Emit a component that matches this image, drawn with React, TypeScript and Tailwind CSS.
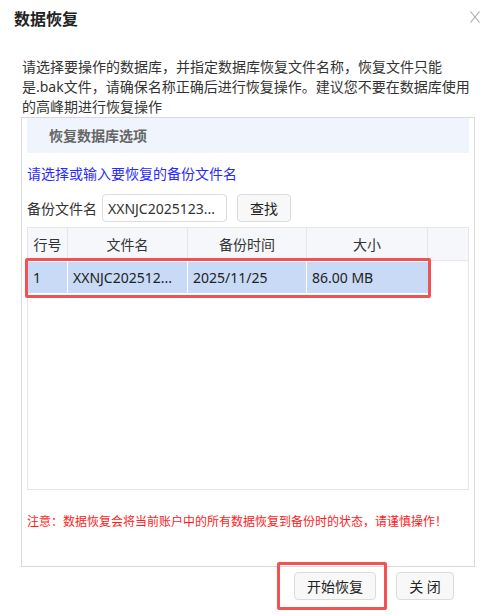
import React from "react";

export default function App() {
  const font = { fontFamily: '"Noto Sans", "Noto Sans CJK SC", sans-serif' };
  return (
    <div className="relative w-[481px] h-[615px] bg-white text-[#333] overflow-hidden" style={font}>
      {/* header */}
      <div className="flex items-start justify-between pl-[14px] pr-[1px] pt-[8px]">
        <div className="text-[16px] leading-[22px] font-bold text-[#222]">数据恢复</div>
        <svg width="10" height="12" viewBox="0 0 10 12" className="mt-[3px]">
          <path d="M0.5 0.5 L9.5 11.5 M9.5 0.5 L0.5 11.5" stroke="#a8a8a8" strokeWidth="1.1" fill="none" />
        </svg>
      </div>

      {/* description */}
      <div className="mt-[27px] pl-[22px] pr-[9px] text-[14px] leading-[20px] text-[#333]">
        请选择要操作的数据库，并指定数据库恢复文件名称，恢复文件只能是.bak文件，请确保名称正确后进行恢复操作。建议您不要在数据库使用的高峰期进行恢复操作
      </div>

      {/* options box */}
      <div className="ml-[21px] w-[454px] h-[450px] border border-[#d9d9d9] px-[5px] flex flex-col">
        <div className="h-[35px] bg-[#f0f4fd] flex items-center pl-[22px] text-[14px] font-bold text-[#666]">
          恢复数据库选项
        </div>
        <div className="mt-[11px] text-[14px] leading-[20px] text-[#2a2aff]">请选择或输入要恢复的备份文件名</div>
        <div className="mt-[10px] flex items-center h-[28px]">
          <span className="text-[14px] text-[#333] w-[75px]">备份文件名</span>
          <div className="w-[125px] h-[28px] border border-[#dcdcdc] rounded-[4px] flex items-center px-[5px] text-[14px] text-[#333] whitespace-nowrap overflow-hidden">
            XXNJC2025123...
          </div>
          <button className="ml-[10px] w-[54px] h-[28px] border border-[#dcdcdc] rounded-[4px] bg-[#f8f8f8] text-[14px] text-[#222] flex items-center justify-center">
            查找
          </button>
        </div>

        {/* table */}
        <div className="mt-[5px] w-[442px] h-[263px] border border-[#e6e6e6] flex flex-col">
          <div className="h-[33px] bg-[#f5f7fa] border-b border-[#e8e8e8] flex text-[14px] text-[#333]">
            <div className="w-[40px] border-r border-[#e6e6e6] flex items-center justify-center">行号</div>
            <div className="w-[120px] border-r border-[#e6e6e6] flex items-center justify-center">文件名</div>
            <div className="w-[119px] border-r border-[#e6e6e6] flex items-center justify-center">备份时间</div>
            <div className="w-[121px] border-r border-[#e6e6e6] flex items-center justify-center">大小</div>
            <div className="flex-1" />
          </div>
          <div className="mt-[1px] h-[31px] flex text-[14px] text-[#222]">
            <div className="w-[40px] bg-[#c8daf6] border-r border-white flex items-center pl-[5px]">1</div>
            <div className="w-[120px] bg-[#c8daf6] border-r border-white flex items-center pl-[5px] whitespace-nowrap overflow-hidden">XXNJC202512...</div>
            <div className="w-[119px] bg-[#c8daf6] border-r border-white flex items-center pl-[5px]">2025/11/25</div>
            <div className="w-[121px] bg-[#c8daf6] flex items-center pl-[5px]">86.00 MB</div>
          </div>
        </div>

        <div className="mt-[24px] text-[12px] leading-[16px] text-[#ff1a1a]">
          注意：数据恢复会将当前账户中的所有数据恢复到备份时的状态，请谨慎操作！
        </div>
      </div>

      {/* buttons */}
      <div className="mt-[5px] flex justify-end gap-[20px] pr-[27px]">
        <button className="w-[82px] h-[28px] border border-[#dcdcdc] rounded-[4px] bg-[#f8f8f8] text-[14px] text-[#222] flex items-center justify-center">
          开始恢复
        </button>
        <button className="w-[58px] h-[28px] border border-[#dcdcdc] rounded-[4px] bg-[#f8f8f8] text-[14px] text-[#222] flex items-center justify-center">
          关 闭
        </button>
      </div>

      {/* annotation overlays */}
      <div className="absolute left-[25px] top-[258px] w-[406px] h-[40px] border-[3px] border-[#f25252] rounded-[2px] pointer-events-none" />
      <div className="absolute left-[277px] top-[562px] w-[110px] h-[48px] border-[3px] border-[#f25252] rounded-[2px] pointer-events-none" />
    </div>
  );
}
